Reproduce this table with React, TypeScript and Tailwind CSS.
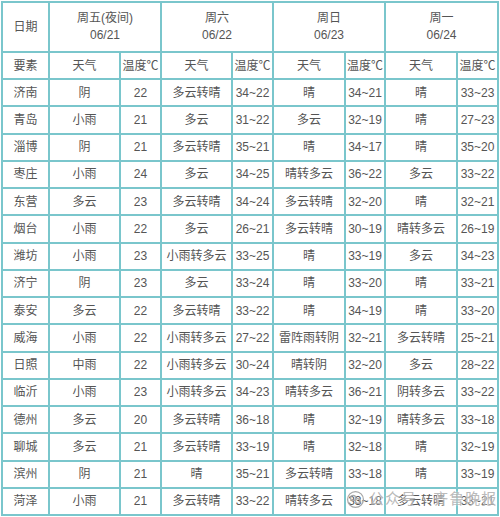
import React from "react"

type Row = [string, string, string, string, string, string, string, string, string]

const rows: Row[] = [
  ["济南", "阴", "22", "多云转晴", "34~22", "晴", "34~21", "晴", "33~23"],
  ["青岛", "小雨", "21", "多云", "31~22", "多云", "32~19", "晴", "27~23"],
  ["淄博", "阴", "21", "多云转晴", "35~21", "晴", "34~17", "晴", "35~20"],
  ["枣庄", "小雨", "24", "多云", "34~25", "晴转多云", "36~22", "多云", "33~22"],
  ["东营", "多云", "23", "多云转晴", "34~24", "多云转晴", "32~20", "晴", "32~21"],
  ["烟台", "小雨", "22", "多云", "26~21", "多云转晴", "30~19", "晴转多云", "26~19"],
  ["潍坊", "小雨", "23", "小雨转多云", "33~25", "晴", "33~19", "多云", "34~23"],
  ["济宁", "阴", "23", "多云", "33~24", "晴", "33~20", "晴", "33~21"],
  ["泰安", "多云", "22", "多云转晴", "33~22", "晴", "34~19", "晴", "33~20"],
  ["威海", "小雨", "22", "小雨转多云", "27~22", "雷阵雨转阴", "32~21", "多云转晴", "25~21"],
  ["日照", "中雨", "22", "小雨转多云", "30~24", "晴转阴", "32~20", "多云", "28~22"],
  ["临沂", "小雨", "23", "小雨转多云", "34~23", "晴转多云", "36~21", "阴转多云", "33~22"],
  ["德州", "多云", "20", "多云转晴", "36~18", "晴", "32~19", "晴转多云", "33~18"],
  ["聊城", "多云", "21", "多云转晴", "33~19", "晴", "32~18", "晴", "32~19"],
  ["滨州", "阴", "21", "晴", "35~21", "多云转晴", "33~18", "晴", "33~19"],
  ["菏泽", "小雨", "21", "多云转晴", "33~22", "晴转多云", "33~18", "多云转晴", "33~21"],
]

const days = [
  ["周五(夜间)", "06/21"],
  ["周六", "06/22"],
  ["周日", "06/23"],
  ["周一", "06/24"],
]

const cell = "flex items-center justify-center border-r-2 border-b-2 border-[#7ac6cc] text-center"

export default function App() {
  return (
    <div className="relative h-[517px] w-[500px] bg-white pl-px pt-px text-[12px] text-[#555] [font-family:'Liberation_Sans','Noto_Sans_CJK_SC',sans-serif]">
      <div className="grid grid-cols-[47px_71px_41px_71px_41px_72px_40px_72px_41px] grid-rows-[50px_27px_repeat(16,27.25px)] border-l-2 border-t-2 border-[#7ac6cc] w-[498px]">
        {/* header */}
        <div className={cell}>日期</div>
        {days.map(([d, date]) => (
          <div key={date} className={`${cell} col-span-2 flex-col leading-[17px]`}>
            <span>{d}</span>
            <span>{date}</span>
          </div>
        ))}

        <div className={cell}>要素</div>
        {days.map(([, date]) => (
          <React.Fragment key={date}>
            <div className={cell}>天气</div>
            <div className={cell}>温度℃</div>
          </React.Fragment>
        ))}

        {/* data */}
        {rows.map((r) =>
          r.map((v, i) => (
            <div key={r[0] + i} className={cell}>
              {v}
            </div>
          ))
        )}
      </div>

      {/* watermark */}
      <div className="absolute left-[346px] top-[489px] flex items-center gap-1 text-[15px] leading-[20px] text-[#a8a8a8]/80 [text-shadow:0_0_2px_#fff]">
        <svg width="19" height="19" viewBox="0 0 24 24" fill="none" stroke="#a8a8a8" strokeWidth="1.6">
          <circle cx="12" cy="12" r="10" />
          <circle cx="9" cy="10" r="3.2" />
          <circle cx="15" cy="14" r="3" />
        </svg>
        <span className="tracking-[1px]">公众号 · 齐鲁晚报</span>
      </div>
    </div>
  )
}
